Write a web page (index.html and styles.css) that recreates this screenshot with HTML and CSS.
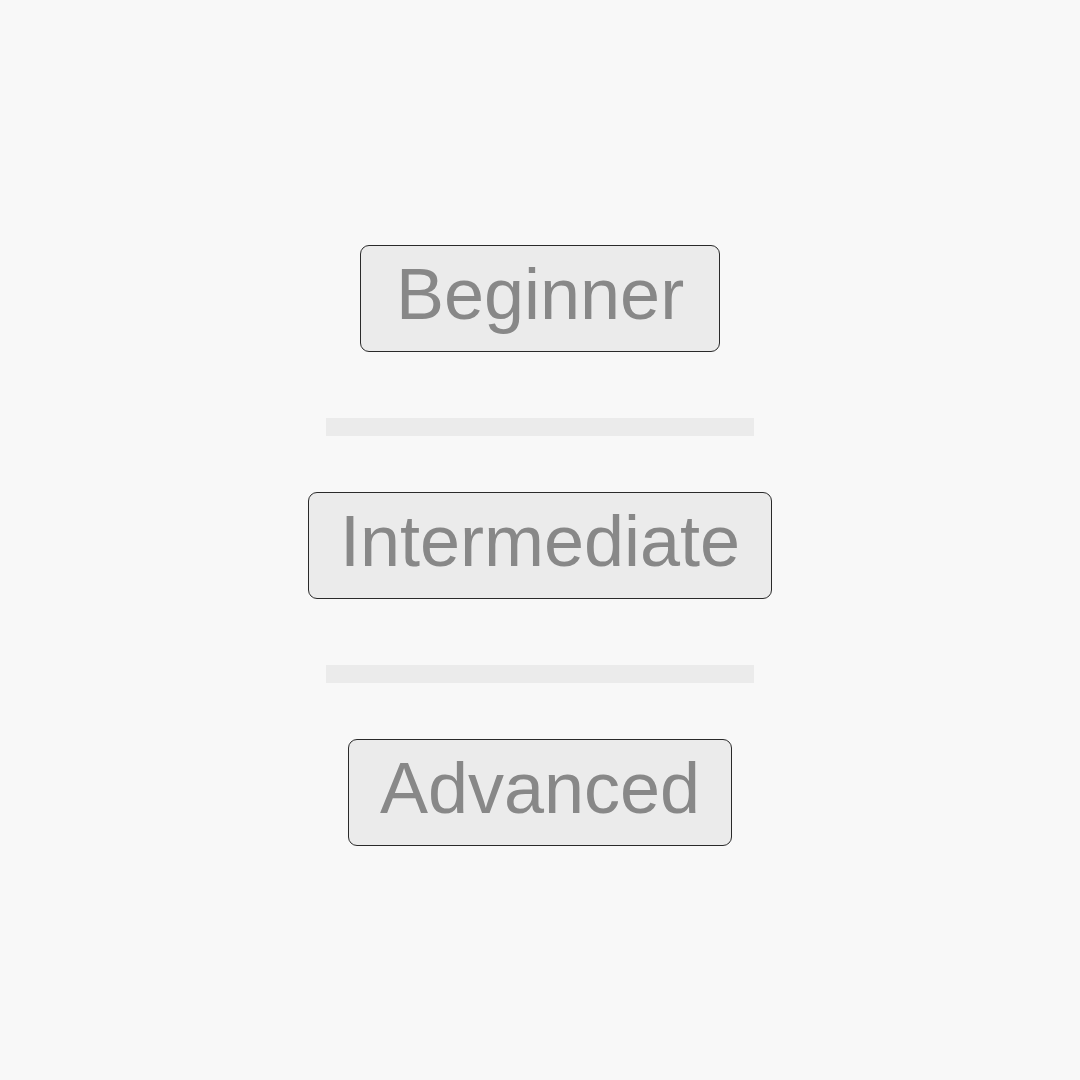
FILE: index.html
```html
<!DOCTYPE html>
<html lang="en">
<head>
  <meta charset="UTF-8">
  <meta name="viewport" content="width=device-width, initial-scale=1.0">
  <title>Choose Level</title>
  <link rel="stylesheet" href="styles.css">
</head>
<body>
  <div class="level-list">
    <button class="level-btn" type="button">Beginner</button>
    <div class="divider"></div>
    <button class="level-btn" type="button">Intermediate</button>
    <div class="divider"></div>
    <button class="level-btn" type="button">Advanced</button>
  </div>
</body>
</html>
```

FILE: styles.css
```css
body {
  margin: 0;
  font-family: "Liberation Sans", Arial, sans-serif;
  background-color: #f8f8f8;
}

.level-list {
  display: flex;
  flex-direction: column;
  align-items: center;
  padding-top: 245px;
}

.level-btn {
  min-width: 360px;
  padding: 7px 31px 15px;
  border: 1px solid #2a2a2a;
  border-radius: 9px;
  background-color: #ebebeb;
  color: #888;
  font-family: inherit;
  font-size: 72px;
  line-height: 83px;
  cursor: pointer;
}

.divider {
  width: 428px;
  height: 18px;
  margin: 66px 0 56px;
  background-color: #ebebeb;
}
```
